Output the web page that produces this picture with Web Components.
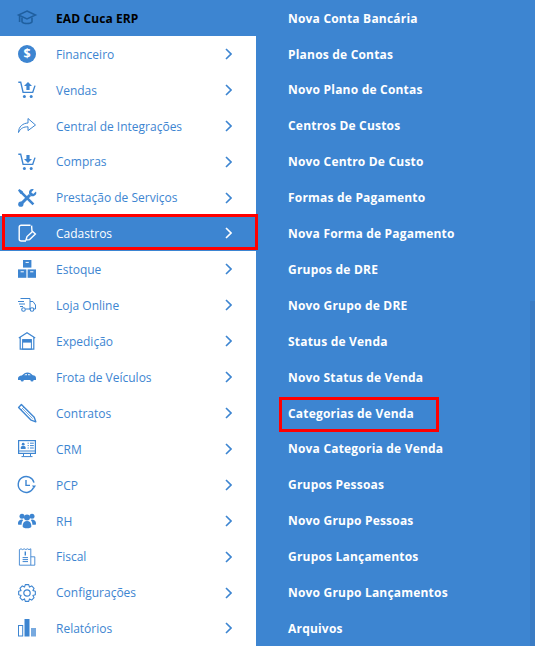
<!DOCTYPE html>
<html lang="pt-BR">
<head>
<meta charset="utf-8">
<title>EAD Cuca ERP</title>
<style>
  html, body { margin: 0; height: 100%; overflow: hidden; background: #3d85d1; }
  body { font-family: "Open Sans", "Liberation Sans", sans-serif; }
</style>
</head>
<body>
<erp-shell>
  <erp-sidebar slot="side" title-text="EAD Cuca ERP">
    <erp-item icon="money">Financeiro</erp-item>
    <erp-item icon="cartUp">Vendas</erp-item>
    <erp-item icon="share">Central de Integrações</erp-item>
    <erp-item icon="cartDown">Compras</erp-item>
    <erp-item icon="tools">Prestação de Serviços</erp-item>
    <erp-item icon="edit" active>Cadastros</erp-item>
    <erp-item icon="boxes">Estoque</erp-item>
    <erp-item icon="truck">Loja Online</erp-item>
    <erp-item icon="garage">Expedição</erp-item>
    <erp-item icon="car">Frota de Veículos</erp-item>
    <erp-item icon="pencil">Contratos</erp-item>
    <erp-item icon="monitor">CRM</erp-item>
    <erp-item icon="clock">PCP</erp-item>
    <erp-item icon="users">RH</erp-item>
    <erp-item icon="invoice">Fiscal</erp-item>
    <erp-item icon="gear">Configurações</erp-item>
    <erp-item icon="bars">Relatórios</erp-item>
  </erp-sidebar>
  <erp-submenu>
    <erp-sublink>Nova Conta Bancária</erp-sublink>
    <erp-sublink>Planos de Contas</erp-sublink>
    <erp-sublink>Novo Plano de Contas</erp-sublink>
    <erp-sublink>Centros De Custos</erp-sublink>
    <erp-sublink>Novo Centro De Custo</erp-sublink>
    <erp-sublink>Formas de Pagamento</erp-sublink>
    <erp-sublink>Nova Forma de Pagamento</erp-sublink>
    <erp-sublink>Grupos de DRE</erp-sublink>
    <erp-sublink>Novo Grupo de DRE</erp-sublink>
    <erp-sublink>Status de Venda</erp-sublink>
    <erp-sublink>Novo Status de Venda</erp-sublink>
    <erp-sublink marked>Categorias de Venda</erp-sublink>
    <erp-sublink>Nova Categoria de Venda</erp-sublink>
    <erp-sublink>Grupos Pessoas</erp-sublink>
    <erp-sublink>Novo Grupo Pessoas</erp-sublink>
    <erp-sublink>Grupos Lançamentos</erp-sublink>
    <erp-sublink>Novo Grupo Lançamentos</erp-sublink>
    <erp-sublink>Arquivos</erp-sublink>
  </erp-submenu>
</erp-shell>

<script>
// gear outline, 8 teeth
function gearPath() {
    let d = '';
    const n = 8, cx = 9, cy = 9;
    for (let i = 0; i < n; i++) {
        const a = (i / n) * Math.PI * 2;
        const pts = [[-0.40, 6.4], [-0.20, 8.5], [0.20, 8.5], [0.40, 6.4]];
        pts.forEach((p, j) => {
            const x = cx + Math.cos(a + p[0]) * p[1];
            const y = cy + Math.sin(a + p[0]) * p[1];
            d += (i === 0 && j === 0 ? 'M' : 'L') + x.toFixed(2) + ' ' + y.toFixed(2) + ' ';
        });
    }
    return d + 'Z';
}

const ICONS = {
    cap: `<path d="M9 2 17.5 6 9 10 .5 6Z" fill="none" stroke-width="1.5"/><path d="M4 8.5v4.4c1.5 2.2 8.5 2.2 10 0V8.5M1.6 6.5v6.5" fill="none" stroke-width="1.6"/>`,
    money: `<circle cx="9" cy="9" r="9" class="f"/><text x="9" y="13.4" text-anchor="middle" font-size="12.5" font-weight="700" fill="var(--icon-bg)" stroke="none" font-family="Open Sans">$</text>`,
    cartUp: `<path d="M.3 1.2h2.4l2.4 10.2h9.6L17 4.6" fill="none" stroke-width="1.4"/><circle cx="6.4" cy="15.4" r="1.5" class="f"/><circle cx="13.2" cy="15.4" r="1.5" class="f"/><path class="f" d="M10 1 14 5H11.6V9H8.4V5H6Z"/>`,
    cartDown: `<path d="M.3 1.2h2.4l2.4 10.2h9.6L17 4.6" fill="none" stroke-width="1.4"/><circle cx="6.4" cy="15.4" r="1.5" class="f"/><circle cx="13.2" cy="15.4" r="1.5" class="f"/><path class="f" d="M10 10 14 6H11.6V2H8.4V6H6Z"/>`,
    share: `<path d="M.5 15.5C.5 9.5 5 6.2 10 6V1.5L17.5 8 10 13.6V9.8C6 9.8 2.5 11 .5 15.5Z" fill="none" stroke-width="1"/>`,
    tools: `<path d="M2.6 2.6 15.4 15.4" fill="none" stroke-width="2.6"/><path class="f" d="M0 1.4 1.4 0 5 2.6 2.6 5Z"/><path d="M3 15 12 6" fill="none" stroke-width="3"/><circle cx="2.8" cy="15.2" r="2.6" class="f"/><path class="f" d="M18 2.4 15.2 5 13.2 3.2 15.8 .4C13-.8 10.6 1.4 11 4.2 11.4 7 14.4 8 16.4 6.8 18.2 5.8 18.8 4 18 2.4Z"/>`,
    edit: `<path d="M12.5 1.2H3.2C2 1.2 1.2 2 1.2 3.2V15C1.2 16.2 2 17 3.2 17H8M13.6 1.6 14 7.5" fill="none" stroke-width="1.4"/><path d="M8 16 9 12.6 14.6 7.4 17.4 10 11.6 15.6Z" fill="none" stroke-width="1.4"/>`,
    boxes: `<rect x="5" y="0" width="8.4" height="7.6" class="f"/><rect x="0" y="9.4" width="8.4" height="8.4" class="f"/><rect x="9.6" y="9.4" width="8.4" height="8.4" class="f"/><path d="M7.6 2.4h3.2M2.6 11.8h3.2M12.2 11.8h3.2" stroke="var(--icon-bg)" stroke-width="1" fill="none"/>`,
    truck: `<path d="M2.5 2.5H12V13H7.5M12 5.5H15L17.5 9V13H16M12 13H11.5" fill="none" stroke-width="1"/><circle cx="5.5" cy="13.5" r="1.8" fill="none" stroke-width="1.1"/><circle cx="14" cy="13.5" r="1.8" fill="none" stroke-width="1.1"/><path d="M0 5.5H6M1 8H7M2 10.5H5" fill="none" stroke-width="1.1"/>`,
    garage: `<path d="M.8 6 9 .8 17.2 6M2.2 5.4V17.2H15.8V5.4" fill="none" stroke-width="1.2"/><rect x="4.6" y="7.6" width="8.8" height="9.6" fill="none" stroke-width="1"/><rect x="4.6" y="7.6" width="8.8" height="3" class="f"/>`,
    car: `<path class="f" d="M0 10.4C0 8.4 1.4 7.8 3.8 7.4L6.6 5.2C8 4.4 11 4.4 12.4 5.2L14.8 7.2C16.8 7.5 18 8.2 18 10V12H0Z"/><path d="M6.2 7.3 7.6 6H9V7.3ZM10 6H11.4L12.8 7.3H10Z" fill="var(--icon-bg)" stroke="none" opacity=".8"/><circle cx="4.2" cy="12" r="1.6" class="f" stroke="var(--icon-bg)" stroke-width=".6"/><circle cx="14" cy="12" r="1.6" class="f" stroke="var(--icon-bg)" stroke-width=".6"/>`,
    pencil: `<path d="M.6 3.4 3.4.6 16.2 13.2 17.8 17.8 13.2 16.2Z" fill="none" stroke-width="1.4" stroke-linejoin="round"/><path d="M3 6 6 3M4.8 4.8 14.6 14.6" fill="none" stroke-width=".9" opacity=".75"/>`,
    monitor: `<rect x=".6" y=".6" width="16.8" height="12.8" fill="none" stroke-width="1.2"/><path d="M0 11H18" fill="none" stroke-width="1"/><path d="M5.5 14V16M12.5 14V16M3.5 16.6H14.5" fill="none" stroke-width="1"/><circle cx="5.2" cy="4.2" r="1.4" class="f"/><path class="f" d="M2.8 9V7.4C2.8 6.4 4 6 5.2 6S7.6 6.4 7.6 7.4V9Z"/><path d="M9.6 3.2H10.8M12 3.2H15.8M9.6 5.6H10.8M12 5.6H15.8M9.6 8H10.8M12 8H15.8" fill="none" stroke-width="1"/>`,
    clock: `<path d="M15.6 11.6A8 8 0 1 1 16 6.6" fill="none" stroke-width="1.4"/><path d="M8 4V9.4H12" fill="none" stroke-width="1.4"/><path class="f" d="M14 9.6 18 9.6 16 12.4Z"/>`,
    users: `<circle cx="4" cy="4.2" r="2.5" class="f"/><circle cx="14" cy="4.2" r="2.5" class="f"/><circle cx="9" cy="5.4" r="3" class="f"/><path class="f" d="M0 11.5C0 8.4 2 7.4 4.6 7.4L5 8.6C4 9.6 3.6 11 3.6 12.8H.8C.2 12.8 0 12.2 0 11.5ZM18 11.5C18 8.4 16 7.4 13.4 7.4L13 8.6C14 9.6 14.4 11 14.4 12.8H17.2C17.8 12.8 18 12.2 18 11.5ZM4.6 14.2C4.6 10.8 6.4 9 9 9S13.4 10.8 13.4 14.2C13.4 15.6 11.4 16.2 9 16.2S4.6 15.6 4.6 14.2Z"/>`,
    invoice: `<path d="M12.8 11V.8L11 1.6 9.4.8 7.8 1.6 6.2.8 4.6 1.6 3 .8 1.4 1.6V17.2H12.8V11M12.8 8.8H16.8V17.2H12.8" fill="none" stroke-width=".9"/><path d="M4.6 9.6H10M4.6 11.6H10M4.6 13.6H10" fill="none" stroke-width="1"/><path d="M7.3 3.4V7.4" fill="none" stroke-width="1.4"/>`,
    gear: `<path d="${gearPath()}" fill="none" stroke-width="1.1" stroke-linejoin="round"/><circle cx="9" cy="9" r="3.2" fill="none" stroke-width="1.2"/>`,
    bars: `<rect x=".5" y="6.5" width="4.2" height="10.5" fill="none" stroke-width="1"/><rect x="6.5" y="0" width="5" height="17.5" class="f"/><rect x="13" y="9" width="5" height="8.5" class="f" opacity=".7"/>`
};

class ErpShell extends HTMLElement {
    constructor() {
        super();
        this.attachShadow({ mode: 'open' });
        this.shadowRoot.innerHTML = `
            <style>
                :host { display: flex; width: 100%; height: 100vh; overflow: hidden; position: relative; background: #3d85d1; }
                .thumb { position: absolute; right: 0; top: 301px; bottom: 0; width: 5px; background: #3b7cc4; }
            </style>
            <slot name="side"></slot>
            <slot></slot>
            <div class="thumb"></div>
        `;
    }
}

class ErpIcon extends HTMLElement {
    constructor() {
        super();
        this.attachShadow({ mode: 'open' });
    }
    connectedCallback() {
        const name = this.getAttribute('name');
        this.shadowRoot.innerHTML = `
            <style>
                :host { display: block; width: 18px; height: 18px; flex: none; color: inherit; }
                svg { display: block; overflow: visible; stroke: currentColor; }
                .f { fill: currentColor; stroke: none; }
            </style>
            <svg width="18" height="18" viewBox="0 0 18 18">${ICONS[name] || ''}</svg>
        `;
    }
}

class ErpSidebar extends HTMLElement {
    constructor() {
        super();
        this.attachShadow({ mode: 'open' });
    }
    connectedCallback() {
        this.shadowRoot.innerHTML = `
            <style>
                :host { display: flex; flex-direction: column; width: 256px; flex: none; background: #fff; --icon-bg: #fff; }
                header {
                    height: 36px; flex: none; display: flex; align-items: center; gap: 20px;
                    padding-left: 18px; background: #3d85d1; color: #1f5f9f; --icon-bg: #3d85d1;
                }
                h1 { margin: 1px 0 0; font: 700 12px/1 "Open Sans", "Liberation Sans", sans-serif; color: #000; letter-spacing: .1px; }
            </style>
            <header>
                <erp-icon name="cap"></erp-icon>
                <h1>${this.getAttribute('title-text')}</h1>
            </header>
            <slot></slot>
        `;
    }
}

class ErpItem extends HTMLElement {
    constructor() {
        super();
        this.attachShadow({ mode: 'open' });
    }
    connectedCallback() {
        this.shadowRoot.innerHTML = `
            <style>
                :host {
                    display: flex; align-items: center; height: 35.91px; flex: none; position: relative;
                    padding-left: 18px; color: #3d85d1; --icon-bg: #fff;
                    font: 400 12px "Open Sans", "Liberation Sans", sans-serif;
                }
                :host([active]) { background: #3d85d1; color: #fff; --icon-bg: #3d85d1; }
                :host([active])::after {
                    content: ""; position: absolute; left: 2px; right: -2px; top: -1.5px; height: 36px;
                    border: 3px solid #f00; box-sizing: border-box; pointer-events: none;
                }
                .label { margin-left: 20px; padding-top: .6px; flex: 1; white-space: nowrap; }
                .arrow { width: 7px; height: 12px; margin-right: 24px; flex: none; }
            </style>
            <erp-icon name="${this.getAttribute('icon')}"></erp-icon>
            <span class="label"><slot></slot></span>
            <svg class="arrow" viewBox="0 0 7 12"><path d="M1 1 6 6 1 11" fill="none" stroke="currentColor" stroke-width="1.6"/></svg>
        `;
    }
}

class ErpSubmenu extends HTMLElement {
    constructor() {
        super();
        this.attachShadow({ mode: 'open' });
        this.shadowRoot.innerHTML = `
            <style>
                :host { display: block; flex: 1; min-width: 0; background: #3d85d1; }
            </style>
            <slot></slot>
        `;
    }
}

class ErpSublink extends HTMLElement {
    constructor() {
        super();
        this.attachShadow({ mode: 'open' });
        this.shadowRoot.innerHTML = `
            <style>
                :host {
                    display: flex; align-items: center; height: 35.91px; box-sizing: border-box; padding: .3px 0 0 32px; position: relative;
                    font: 700 12px "Open Sans", "Liberation Sans", sans-serif; letter-spacing: .2px; color: #fff; white-space: nowrap;
                }
                :host([marked])::after {
                    content: ""; position: absolute; left: 23px; width: 160px; top: 2px; height: 35px;
                    border: 3px solid #f00; box-sizing: border-box; pointer-events: none;
                }
            </style>
            <slot></slot>
        `;
    }
}

customElements.define('erp-shell', ErpShell);
customElements.define('erp-icon', ErpIcon);
customElements.define('erp-sidebar', ErpSidebar);
customElements.define('erp-item', ErpItem);
customElements.define('erp-submenu', ErpSubmenu);
customElements.define('erp-sublink', ErpSublink);
</script>
</body>
</html>
